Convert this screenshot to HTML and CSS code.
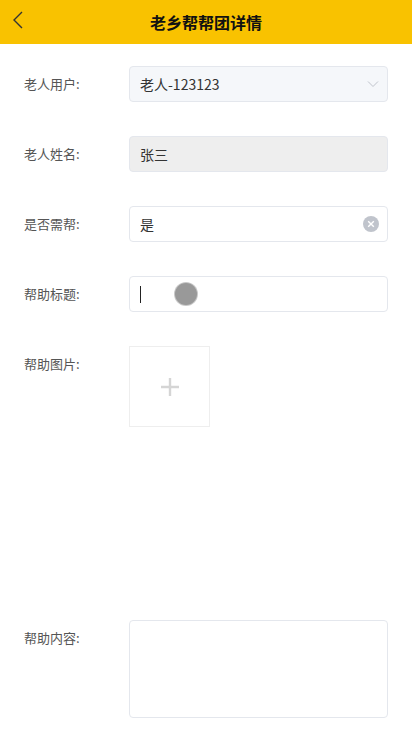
FILE: index.html
```html
<!DOCTYPE html>
<html lang="zh-CN">

<head>
    <meta charset="UTF-8">
    <meta name="viewport" content="width=device-width, initial-scale=1.0">
    <title>老乡帮帮团详情</title>
    <link rel="stylesheet" href="styles.css">
</head>

<body>
    <div class="navbar">
        <span class="back">
            <svg width="12" height="18" viewBox="0 0 12 18"><path d="M10 1 L2 9 L10 17" fill="none" stroke="#333" stroke-width="1.4"/></svg>
        </span>
        <h1>老乡帮帮团详情</h1>
    </div>

    <div class="form">
        <div class="row">
            <label>老人用户:</label>
            <div class="field select">
                <span>老人-123123</span>
                <svg width="12" height="8" viewBox="0 0 12 8"><path d="M1 1.5 L6 6.5 L11 1.5" fill="none" stroke="#c0c4cc" stroke-width="1"/></svg>
            </div>
        </div>

        <div class="row">
            <label>老人姓名:</label>
            <div class="field disabled"><span>张三</span></div>
        </div>

        <div class="row">
            <label>是否需帮:</label>
            <div class="field">
                <span>是</span>
                <span class="clear">
                    <svg width="16" height="16" viewBox="0 0 16 16"><circle cx="8" cy="8" r="8" fill="#c0c4cc"/><path d="M5.2 5.2 L10.8 10.8 M10.8 5.2 L5.2 10.8" stroke="#fff" stroke-width="1.4"/></svg>
                </span>
            </div>
        </div>

        <div class="row">
            <label>帮助标题:</label>
            <div class="field title">
                <span class="caret"></span>
                <span class="touch"></span>
            </div>
        </div>

        <div class="row upload-row">
            <label>帮助图片:</label>
            <div class="upload">
                <svg width="20" height="20" viewBox="0 0 20 20"><path d="M10 1 V19 M1 10 H19" stroke="#d5d5d5" stroke-width="2.4"/></svg>
            </div>
        </div>

        <div class="row">
            <label>帮助内容:</label>
            <div class="field textarea"></div>
        </div>
    </div>
</body>

</html>
```

FILE: styles.css
```css
body {
    font-family: "Noto Sans CJK SC", "Open Sans", sans-serif;
    background-color: #fff;
    margin: 0;
    padding: 0;
    color: #333;
}

.navbar {
    height: 44px;
    background-color: #f9c200;
    display: flex;
    align-items: center;
    justify-content: center;
    position: relative;
}

.navbar h1 {
    margin: 0;
    font-size: 16px;
    font-weight: bold;
    color: #111;
}

.back {
    position: absolute;
    left: 12px;
    top: 11px;
    display: flex;
}

.form {
    padding: 22px 24px 0 24px;
}

.row {
    display: flex;
    align-items: flex-start;
    margin-bottom: 34px;
}

.row label {
    width: 105px;
    flex-shrink: 0;
    font-size: 13px;
    line-height: 36px;
    color: #555;
}

.field {
    width: 259px;
    height: 36px;
    box-sizing: border-box;
    border: 1px solid #e4e7ed;
    border-radius: 4px;
    display: flex;
    align-items: center;
    justify-content: space-between;
    padding: 0 10px;
    font-size: 14px;
    color: #333;
}

.select {
    background-color: #f5f7fa;
    padding-right: 8px;
}

.disabled {
    background-color: #eeeeee;
}

.clear {
    display: flex;
    margin-right: -2px;
}

.title {
    justify-content: flex-start;
}

.caret {
    width: 1px;
    height: 17px;
    background-color: #222;
}

.touch {
    width: 22px;
    height: 22px;
    margin-left: 34px;
    border-radius: 50%;
    background-color: #999;
    box-shadow: 0 0 0 1px #c8c8c8;
}

.upload-row {
    height: 240px;
}

.upload {
    width: 81px;
    height: 81px;
    box-sizing: border-box;
    border: 1px solid #eeeeee;
    display: flex;
    align-items: center;
    justify-content: center;
}

.textarea {
    height: 98px;
}
```
